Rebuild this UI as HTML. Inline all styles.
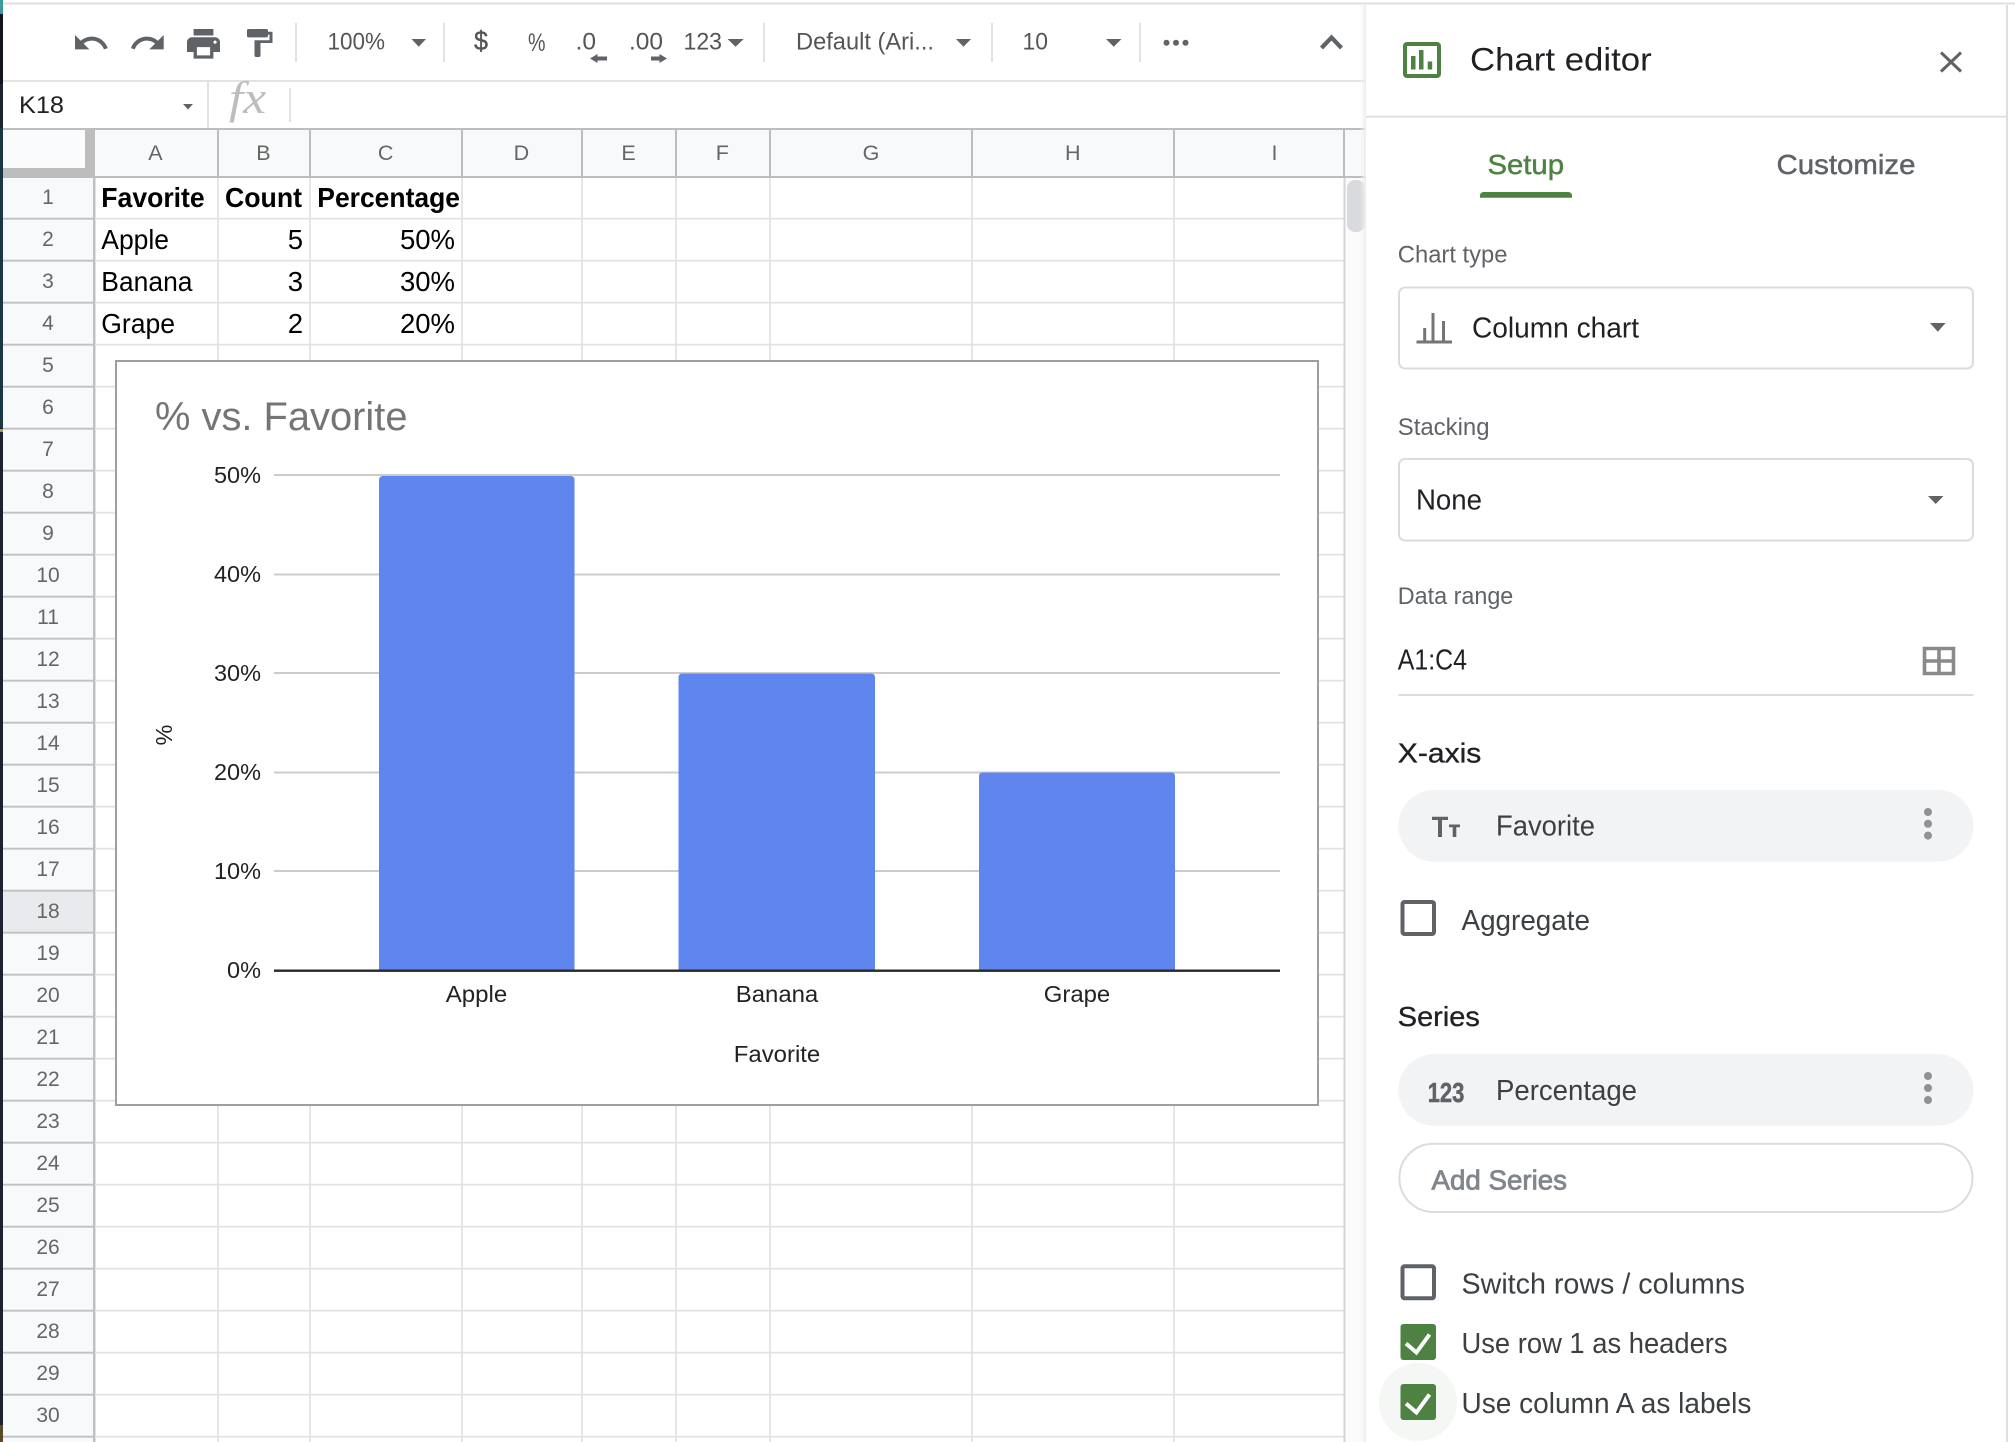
<!DOCTYPE html>
<html lang="en">
<head>
<meta charset="utf-8">
<title>Chart editor</title>
<style>
html,body{margin:0;padding:0;background:#fff;width:2015px;height:1442px;overflow:hidden}
svg{display:block}
text{font-family:"Liberation Sans",Arial,sans-serif;white-space:pre}
.rn{font-size:21px;fill:#666;text-anchor:middle}
.ch{font-size:21.5px;fill:#666;text-anchor:middle}
.c{font-size:27.5px;fill:#000}
.cb{font-size:27.5px;fill:#000;font-weight:bold}
.cr{font-size:27.5px;fill:#000;text-anchor:end}
.tb{font-size:24.5px;fill:#555}
.ax{font-size:23.5px;fill:#222}
.lb{font-size:24px;fill:#5f6368}
.v{font-size:28.5px;fill:#3c4043}
.dk{font-size:28.5px;fill:#202124}
.md{font-size:27.5px;fill:#202124;stroke:#202124;stroke-width:.35}
</style>
</head>
<body>
<svg width="2015" height="1442" viewBox="0 0 2015 1442" xmlns="http://www.w3.org/2000/svg">
<rect width="2015" height="1442" fill="#fff"/>

<!-- left window edge -->
<rect x="0" y="0" width="3" height="1442" fill="#1d2230"/>
<rect x="0" y="0" width="3" height="14" fill="#3a9a9c"/>
<rect x="0" y="14" width="3" height="70" fill="#12161c"/>
<rect x="0" y="128" width="3" height="300" fill="#173844"/>
<rect x="0" y="429" width="3" height="3" fill="#a89a50"/>
<rect x="0" y="1425" width="3" height="17" fill="#5a4a28"/>

<!-- top line -->
<rect x="3" y="2.5" width="2012" height="2" fill="#e0e0e0"/>

<!-- toolbar separators -->
<rect x="3" y="80" width="1363" height="2" fill="#e3e3e3"/>
<g fill="#e3e3e3">
<rect x="295" y="23" width="2" height="39"/>
<rect x="443" y="23" width="2" height="39"/>
<rect x="763" y="23" width="2" height="39"/>
<rect x="991" y="23" width="2" height="39"/>
<rect x="1139" y="23" width="2" height="39"/>
</g>

<!-- toolbar icons -->
<g fill="#5f6368">
<path transform="translate(71.8 23.8) scale(1.6)" d="M12.5 8c-2.65 0-5.05.99-6.9 2.6L2 7v9h9l-3.62-3.62c1.39-1.16 3.16-1.88 5.12-1.88 3.54 0 6.55 2.31 7.6 5.5l2.37-.78C21.08 11.03 17.15 8 12.5 8z"/>
<path transform="translate(128.5 23.8) scale(1.6)" d="M18.4 10.6C16.55 8.99 14.15 8 11.5 8c-4.65 0-8.58 3.03-9.96 7.22L3.9 16c1.05-3.19 4.05-5.5 7.6-5.5 1.95 0 3.73.72 5.12 1.88L13 16h9V7l-3.6 3.6z"/>
<path transform="translate(183.7 24) scale(1.65)" d="M19 8H5c-1.66 0-3 1.34-3 3v6h4v4h12v-4h4v-6c0-1.66-1.34-3-3-3zm-3 11H8v-5h8v5zm3-7c-.55 0-1-.45-1-1s.45-1 1-1 1 .45 1 1-.45 1-1 1zm-1-9H6v4h12V3z"/>
<path transform="translate(241 26.2) scale(1.5 1.4)" d="M18 4V3c0-.55-.45-1-1-1H5c-.55 0-1 .45-1 1v4c0 .55.45 1 1 1h12c.55 0 1-.45 1-1V6h1v4H9v11c0 .55.45 1 1 1h2c.55 0 1-.45 1-1v-9h8V4h-3z"/>
<path d="M411.5 39H426L418.7 46.7Z"/>
<path d="M727.5 39H743.7L735.6 46.7Z"/>
<path d="M956 39H971L963.5 46.7Z"/>
<path d="M1106 39H1121.5L1113.7 46.7Z"/>
<circle cx="1166.5" cy="42.7" r="3"/><circle cx="1176" cy="42.7" r="3"/><circle cx="1185.5" cy="42.7" r="3"/>
<path d="M183 104H193L188 109.5Z"/>
<path d="M590 58.5L597.5 54V56.5H607V60.5H597.5V63Z"/>
<path d="M667 58.5L659.5 54V56.5H651V60.5H659.5V63Z"/>
</g>
<path d="M1321.5 48L1331.5 37.5L1341.5 48" fill="none" stroke="#5f6368" stroke-width="4.2"/>

<text class="tb" x="327.5" y="49.5" textLength="57.5" lengthAdjust="spacingAndGlyphs">100%</text>
<text class="tb" x="474" y="50" textLength="14" lengthAdjust="spacingAndGlyphs" style="font-size:27px" stroke="#555" stroke-width=".4">$</text>
<text class="tb" x="528" y="51" textLength="17.5" lengthAdjust="spacingAndGlyphs" style="font-size:25px">%</text>
<text class="tb" x="575.5" y="49.5" textLength="20.5" lengthAdjust="spacingAndGlyphs">.0</text>
<text class="tb" x="629" y="49.5" textLength="34" lengthAdjust="spacingAndGlyphs">.00</text>
<text class="tb" x="683.5" y="49.5" textLength="38.5" lengthAdjust="spacingAndGlyphs">123</text>
<text class="tb" x="796" y="49.5" textLength="138" lengthAdjust="spacingAndGlyphs">Default (Ari...</text>
<text class="tb" x="1022.5" y="49.5" textLength="25.5" lengthAdjust="spacingAndGlyphs">10</text>

<!-- formula bar -->
<text x="19" y="113" style="font-size:24.5px" fill="#202124" textLength="45" lengthAdjust="spacingAndGlyphs">K18</text>
<rect x="207" y="82" width="2" height="46" fill="#e3e3e3"/>
<rect x="289" y="88" width="2" height="34" fill="#e3e3e3"/>
<text x="229" y="113" fill="#bdbdbd" textLength="37" lengthAdjust="spacingAndGlyphs" style="font-family:'Liberation Serif',serif;font-style:italic;font-size:45px">fx</text>

<!-- column header -->
<rect x="3" y="129" width="1363" height="48" fill="#f8f9fa"/>
<rect x="3" y="128" width="1363" height="2" fill="#bdbdbd"/>
<rect x="3" y="176" width="1363" height="2" fill="#bdbdbd"/>
<rect x="3" y="130" width="82" height="38" fill="#fafbfc"/>
<rect x="85" y="130" width="10" height="47" fill="#bdbdbd"/>
<rect x="3" y="168" width="92" height="9" fill="#bdbdbd"/>
<path d="M218 130V177M310 130V177M462 130V177M582 130V177M676 130V177M770 130V177M972 130V177M1174 130V177M1344 130V177" stroke="#bdbdbd" stroke-width="2" fill="none"/>
<text class="ch" x="155.4" y="160">A</text>
<text class="ch" x="263.4" y="160">B</text>
<text class="ch" x="385.7" y="160">C</text>
<text class="ch" x="521.4" y="160">D</text>
<text class="ch" x="628.6" y="160">E</text>
<text class="ch" x="722.3" y="160">F</text>
<text class="ch" x="871" y="160">G</text>
<text class="ch" x="1072.8" y="160">H</text>
<text class="ch" x="1274.5" y="160">I</text>

<!-- scrollbar strip -->
<rect x="1345" y="178" width="21" height="1264" fill="#fbfbfb"/>
<rect x="1347" y="180" width="18" height="52" rx="8" fill="#d8dadd"/>

<!-- row header -->
<rect x="3" y="178" width="90" height="1264" fill="#f8f9fa"/>
<rect x="3" y="891" width="90" height="42" fill="#e8eaed"/>
<rect x="93" y="177" width="2.5" height="1265" fill="#c0c0c0"/>

<!-- grid lines -->
<path d="M95 218.7H1344M95 260.7H1344M95 302.7H1344M95 344.7H1344M95 386.7H1344M95 428.7H1344M95 470.7H1344M95 512.7H1344M95 554.7H1344M95 596.7H1344M95 638.7H1344M95 680.7H1344M95 722.7H1344M95 764.7H1344M95 806.7H1344M95 848.7H1344M95 890.7H1344M95 932.7H1344M95 974.7H1344M95 1016.7H1344M95 1058.7H1344M95 1100.7H1344M95 1142.7H1344M95 1184.7H1344M95 1226.7H1344M95 1268.7H1344M95 1310.7H1344M95 1352.7H1344M95 1394.7H1344M95 1436.7H1344" stroke="#e3e3e3" stroke-width="1.8" fill="none"/>
<path d="M218 178V1442M310 178V1442M462 178V1442M582 178V1442M676 178V1442M770 178V1442M972 178V1442M1174 178V1442" stroke="#e3e3e3" stroke-width="1.8" fill="none"/>
<rect x="1343.5" y="178" width="2" height="1264" fill="#d4d4d4"/>
<path d="M3 218.7H93M3 260.7H93M3 302.7H93M3 344.7H93M3 386.7H93M3 428.7H93M3 470.7H93M3 512.7H93M3 554.7H93M3 596.7H93M3 638.7H93M3 680.7H93M3 722.7H93M3 764.7H93M3 806.7H93M3 848.7H93M3 890.7H93M3 932.7H93M3 974.7H93M3 1016.7H93M3 1058.7H93M3 1100.7H93M3 1142.7H93M3 1184.7H93M3 1226.7H93M3 1268.7H93M3 1310.7H93M3 1352.7H93M3 1394.7H93M3 1436.7H93" stroke="#c0c0c0" stroke-width="1.8" fill="none"/>

<!-- row numbers -->
<text class="rn" x="48" y="204">1</text><text class="rn" x="48" y="246">2</text><text class="rn" x="48" y="288">3</text><text class="rn" x="48" y="330">4</text><text class="rn" x="48" y="372">5</text><text class="rn" x="48" y="414">6</text><text class="rn" x="48" y="456">7</text><text class="rn" x="48" y="498">8</text><text class="rn" x="48" y="540">9</text><text class="rn" x="48" y="582">10</text><text class="rn" x="48" y="624">11</text><text class="rn" x="48" y="666">12</text><text class="rn" x="48" y="708">13</text><text class="rn" x="48" y="750">14</text><text class="rn" x="48" y="792">15</text><text class="rn" x="48" y="834">16</text><text class="rn" x="48" y="876">17</text><text class="rn" x="48" y="918">18</text><text class="rn" x="48" y="960">19</text><text class="rn" x="48" y="1002">20</text><text class="rn" x="48" y="1044">21</text><text class="rn" x="48" y="1086">22</text><text class="rn" x="48" y="1128">23</text><text class="rn" x="48" y="1170">24</text><text class="rn" x="48" y="1212">25</text><text class="rn" x="48" y="1254">26</text><text class="rn" x="48" y="1296">27</text><text class="rn" x="48" y="1338">28</text><text class="rn" x="48" y="1380">29</text><text class="rn" x="48" y="1422">30</text>

<!-- cells -->
<text class="cb" x="101.3" y="207" textLength="103.4" lengthAdjust="spacingAndGlyphs">Favorite</text>
<text class="cb" x="225" y="207" textLength="77" lengthAdjust="spacingAndGlyphs">Count</text>
<text class="cb" x="317.3" y="207" textLength="142.7" lengthAdjust="spacingAndGlyphs">Percentage</text>
<text class="c" x="101.3" y="249" textLength="67.7" lengthAdjust="spacingAndGlyphs">Apple</text>
<text class="c" x="101.3" y="291" textLength="91.2" lengthAdjust="spacingAndGlyphs">Banana</text>
<text class="c" x="101.3" y="333" textLength="73.7" lengthAdjust="spacingAndGlyphs">Grape</text>
<text class="cr" x="303" y="249">5</text>
<text class="cr" x="303" y="291">3</text>
<text class="cr" x="303" y="333">2</text>
<text class="cr" x="455" y="249">50%</text>
<text class="cr" x="455" y="291">30%</text>
<text class="cr" x="455" y="333">20%</text>

<!-- chart -->
<rect x="116" y="361" width="1202" height="744" fill="#fff" stroke="#9e9e9e" stroke-width="2"/>
<text x="155" y="430" fill="#757575" style="font-size:39.5px" textLength="252.5" lengthAdjust="spacingAndGlyphs">% vs. Favorite</text>
<path d="M274 475H1280M274 574.5H1280M274 673H1280M274 772.5H1280M274 871H1280" stroke="#cccccc" stroke-width="2" fill="none"/>
<path d="M379 970V480Q379 476 383 476H570.5Q574.5 476 574.5 480V970Z" fill="#5f86ee"/>
<path d="M678.5 970V677.5Q678.5 673.5 682.5 673.5H871Q875 673.5 875 677.5V970Z" fill="#5f86ee"/>
<path d="M979 970V776Q979 772.5 983 772.5H1171Q1175 772.5 1175 776V970Z" fill="#5f86ee"/>
<rect x="274" y="969.5" width="1006" height="2.4" fill="#2a2a2e"/>
<g class="ax" text-anchor="end">
<text class="ax" x="261" y="483">50%</text>
<text class="ax" x="261" y="582">40%</text>
<text class="ax" x="261" y="681">30%</text>
<text class="ax" x="261" y="780">20%</text>
<text class="ax" x="261" y="879">10%</text>
<text class="ax" x="261" y="978">0%</text>
</g>
<g text-anchor="middle">
<text class="ax" x="476.5" y="1002" textLength="61.5" lengthAdjust="spacingAndGlyphs">Apple</text>
<text class="ax" x="777" y="1002" textLength="82.5" lengthAdjust="spacingAndGlyphs">Banana</text>
<text class="ax" x="1077" y="1002" textLength="66.5" lengthAdjust="spacingAndGlyphs">Grape</text>
<text class="ax" x="777" y="1062" textLength="86.5" lengthAdjust="spacingAndGlyphs">Favorite</text>
<text class="ax" transform="translate(172 735) rotate(-90)" x="0" y="0">%</text>
</g>

<!-- panel -->
<defs>
<linearGradient id="sh" x1="0" x2="1" y1="0" y2="0">
<stop offset="0" stop-color="#f4f4f4" stop-opacity="0"/>
<stop offset="1" stop-color="#ececec"/>
</linearGradient>
</defs>
<rect x="1360" y="5" width="6" height="1437" fill="url(#sh)"/>
<rect x="1366" y="5" width="640" height="1437" fill="#fff"/>
<rect x="2006" y="5" width="2" height="1437" fill="#dedede"/>
<rect x="1366" y="115.7" width="640" height="2" fill="#e0e0e0"/>

<!-- panel header -->
<rect x="1405" y="44" width="34" height="32" rx="2" fill="none" stroke="#4e8242" stroke-width="4"/>
<rect x="1411" y="56" width="4.5" height="13.5" fill="#4e8242"/>
<rect x="1419" y="50" width="4.5" height="19.5" fill="#4e8242"/>
<rect x="1427.7" y="61.5" width="4.5" height="8" fill="#4e8242"/>
<text x="1470" y="70.7" fill="#202124" style="font-size:32px" textLength="181.7" lengthAdjust="spacingAndGlyphs">Chart editor</text>
<path d="M1941 52.5L1961 71.5M1961 52.5L1941 71.5" stroke="#5f6368" stroke-width="3" fill="none"/>

<!-- tabs -->
<text x="1487.5" y="174" fill="#4e8242" stroke="#4e8242" stroke-width=".45" style="font-size:27.5px" textLength="76.5" lengthAdjust="spacingAndGlyphs">Setup</text>
<text x="1776.5" y="174" fill="#5f6368" stroke="#5f6368" stroke-width=".45" style="font-size:27.5px" textLength="139" lengthAdjust="spacingAndGlyphs">Customize</text>
<path d="M1480 197.7V196Q1480 192 1484 192H1568Q1572 192 1572 196V197.7Z" fill="#4e8242"/>

<!-- chart type -->
<text class="lb" x="1397.8" y="262.7" textLength="109.7" lengthAdjust="spacingAndGlyphs">Chart type</text>
<rect x="1399" y="287.5" width="574" height="81" rx="6" fill="#fff" stroke="#dadce0" stroke-width="2"/>
<path d="M1416.5 342H1452M1424.7 342V328M1433 342V313M1443.5 342V321" stroke="#757575" stroke-width="3" fill="none"/>
<text class="dk" x="1472" y="337.3" textLength="167" lengthAdjust="spacingAndGlyphs">Column chart</text>
<path d="M1930 323H1945.6L1937.8 331.7Z" fill="#5f6368"/>

<!-- stacking -->
<text class="lb" x="1397.8" y="435" textLength="91.7" lengthAdjust="spacingAndGlyphs">Stacking</text>
<rect x="1399" y="459" width="574" height="81.5" rx="6" fill="#fff" stroke="#dadce0" stroke-width="2"/>
<text class="dk" x="1416" y="509.3" textLength="66" lengthAdjust="spacingAndGlyphs">None</text>
<path d="M1928 496H1943.5L1935.7 504Z" fill="#5f6368"/>

<!-- data range -->
<text class="lb" x="1397.8" y="604" textLength="115.5" lengthAdjust="spacingAndGlyphs">Data range</text>
<text class="dk" x="1397.8" y="669.3" textLength="69.2" lengthAdjust="spacingAndGlyphs">A1:C4</text>
<path d="M1924.5 648.5H1953.5V673.5H1924.5ZM1939 648.5V673.5M1924.5 661H1953.5" fill="none" stroke="#8a8a8a" stroke-width="3.6"/>
<rect x="1398.4" y="694" width="575" height="2" fill="#dadce0"/>

<!-- x axis -->
<text class="md" x="1397.8" y="762.3" textLength="83.5" lengthAdjust="spacingAndGlyphs">X-axis</text>
<rect x="1398.4" y="790" width="575" height="71.7" rx="35.8" fill="#f1f3f4"/>
<path d="M1432 816.7H1448V820H1442V837H1438V820H1432Z" fill="#5f6368"/>
<path d="M1449 824.5H1460V827.3H1456.3V837H1452.7V827.3H1449Z" fill="#5f6368"/>
<text class="v" x="1496" y="835.7" textLength="99" lengthAdjust="spacingAndGlyphs">Favorite</text>
<g fill="#8f9296"><circle cx="1928" cy="812" r="4"/><circle cx="1928" cy="823.8" r="4"/><circle cx="1928" cy="835.6" r="4"/></g>

<!-- aggregate -->
<rect x="1402.5" y="902" width="31.5" height="32" rx="2" fill="#fff" stroke="#5f6368" stroke-width="4"/>
<text class="v" x="1461.5" y="930" textLength="128.5" lengthAdjust="spacingAndGlyphs">Aggregate</text>

<!-- series -->
<text class="md" x="1397.8" y="1026" textLength="82" lengthAdjust="spacingAndGlyphs">Series</text>
<rect x="1398.4" y="1054.3" width="575" height="71.4" rx="35.7" fill="#f1f3f4"/>
<text x="1427.7" y="1102" fill="#5f6368" stroke="#5f6368" stroke-width=".5" style="font-size:27.5px;font-weight:bold" textLength="36.7" lengthAdjust="spacingAndGlyphs">123</text>
<text class="v" x="1496" y="1100" textLength="141" lengthAdjust="spacingAndGlyphs">Percentage</text>
<g fill="#8f9296"><circle cx="1928" cy="1076" r="4"/><circle cx="1928" cy="1088" r="4"/><circle cx="1928" cy="1100" r="4"/></g>
<rect x="1399.4" y="1143.7" width="573" height="68.3" rx="34" fill="#fff" stroke="#dadce0" stroke-width="2"/>
<text x="1431.5" y="1189.3" fill="#80868b" stroke="#80868b" stroke-width=".8" style="font-size:28px" textLength="135.5" lengthAdjust="spacingAndGlyphs">Add Series</text>

<!-- checkboxes -->
<rect x="1402.5" y="1266.3" width="31.5" height="32" rx="2" fill="#fff" stroke="#5f6368" stroke-width="4"/>
<text class="v" x="1461.5" y="1293.3" textLength="283.5" lengthAdjust="spacingAndGlyphs">Switch rows / columns</text>
<rect x="1400.5" y="1324" width="35.5" height="36" rx="3" fill="#4e8242"/>
<path d="M1406 1343.5L1416.4 1352.5L1429.5 1334.5" fill="none" stroke="#fff" stroke-width="4"/>
<text class="v" x="1461.5" y="1353" textLength="266.1" lengthAdjust="spacingAndGlyphs">Use row 1 as headers</text>
<circle cx="1418" cy="1402" r="39" fill="#f4f7f3"/>
<rect x="1400.5" y="1384" width="35.5" height="36" rx="3" fill="#4e8242"/>
<path d="M1406 1403.5L1416.4 1412.5L1429.5 1394.5" fill="none" stroke="#fff" stroke-width="4"/>
<text class="v" x="1461.5" y="1413" textLength="289.9" lengthAdjust="spacingAndGlyphs">Use column A as labels</text>
</svg>
</body>
</html>
